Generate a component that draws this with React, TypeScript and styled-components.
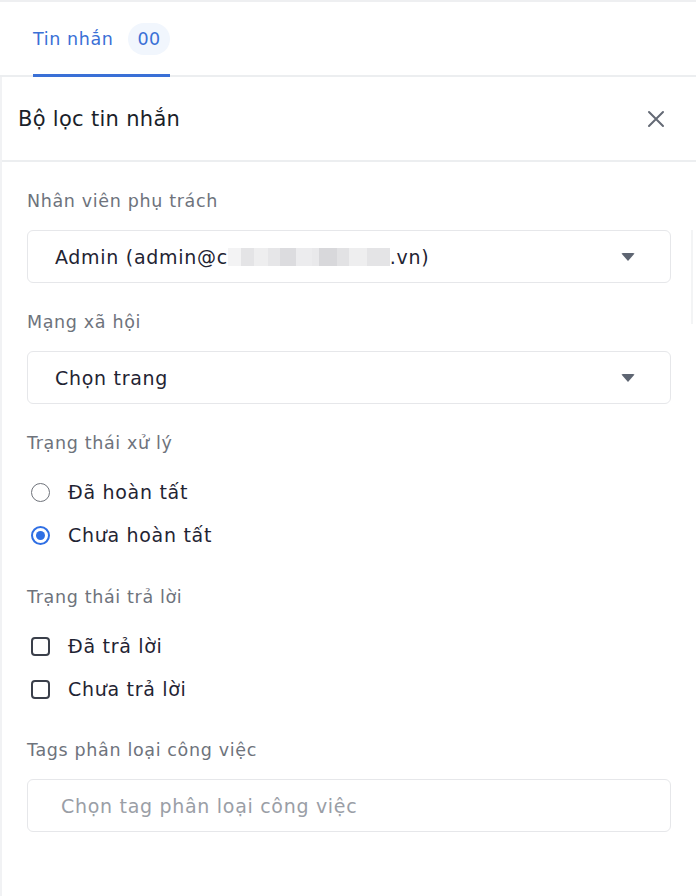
import React from "react";
import styled, { createGlobalStyle } from "styled-components";

const Global = createGlobalStyle`
  html, body { margin: 0; padding: 0; background: #fff; }
  body { font-family: "DejaVu Sans", "Open Sans", sans-serif; color: #1f2433; }
  * { box-sizing: border-box; }
`;

const Page = styled.div`
  width: 696px;
  height: 896px;
  overflow: hidden;
  border-top: 2px solid #eeeff1;
  position: relative;
`;

const TabBar = styled.div`
  height: 75px;
  display: flex;
  align-items: flex-end;
  padding-left: 33px;
  border-bottom: 2px solid #eceef0;
`;

const Tab = styled.div`
  display: flex;
  align-items: center;
  gap: 15px;
  height: 62px;
  padding-bottom: 12px;
  border-bottom: 3px solid #3a70d6;
  margin-bottom: -2px;
`;

const TabText = styled.span`
  font-size: 17.5px;
  letter-spacing: 0.6px;
  color: #3a70d6;
`;

const Badge = styled.span`
  display: inline-flex;
  align-items: center;
  justify-content: center;
  height: 32px;
  padding: 0 9px;
  border-radius: 16px;
  background: #f1f6fd;
  color: #3a70d6;
  font-size: 17.5px;
  letter-spacing: 0.5px;
`;

const Body = styled.div`
  border-left: 2px solid #f1f2f4;
  height: 100%;
`;

const Header = styled.div`
  height: 85px;
  display: flex;
  align-items: center;
  justify-content: space-between;
  padding: 0 30px 0 16px;
  border-bottom: 2px solid #eceef0;
`;

const Title = styled.h1`
  margin: 0;
  font-size: 21px;
  letter-spacing: 0.3px;
  font-weight: 500;
  color: #1b1f2a;
`;

const CloseBtn = styled.button`
  border: 0;
  background: none;
  padding: 0;
  width: 20px;
  height: 20px;
  display: flex;
  align-items: center;
  justify-content: center;
`;

const Form = styled.div`
  padding: 27px 25px 0 25px;
  display: flex;
  flex-direction: column;
`;

const Label = styled.div<{ $mt?: number }>`
  font-size: 17.5px;
  letter-spacing: 0.65px;
  color: #6e737c;
  line-height: 24px;
  margin-top: ${(p) => p.$mt ?? 0}px;
`;

const Select = styled.div<{ $pl?: number }>`
  margin-top: 17px;
  height: 53px;
  border: 1px solid #e6e7ea;
  border-radius: 6px;
  display: flex;
  align-items: center;
  justify-content: space-between;
  padding: 0 35px 0 ${(p) => p.$pl ?? 27}px;
`;

const Value = styled.span<{ $placeholder?: boolean }>`
  font-size: 19px;
  letter-spacing: 0.7px;
  line-height: 24px;
  color: ${(p) => (p.$placeholder ? "#9a9ea6" : "#1f2433")};
  display: inline-flex;
  align-items: center;
  white-space: nowrap;
`;

const Blur = styled.span<{ $w: number }>`
  display: inline-block;
  width: ${(p) => p.$w}px;
  height: 18px;
  background: linear-gradient(
    90deg,
    #f3f3f4 0 8%,
    #e4e4e6 8% 16%,
    #eeeeef 16% 25%,
    #e6e6e8 25% 32%,
    #dcdcdf 32% 42%,
    #ececee 42% 52%,
    #e9e9eb 52% 56%,
    #d8d8db 56% 67%,
    #e2e2e4 67% 75%,
    #eeeeef 75% 86%,
    #e4e4e6 86% 100%
  );
`;

const Caret = styled.span`
  width: 0;
  height: 0;
  border-left: 7px solid transparent;
  border-right: 7px solid transparent;
  border-top: 8px solid #5e6572;
  border-radius: 2px;
`;

const Options = styled.div`
  display: flex;
  flex-direction: column;
  gap: 19px;
  margin-top: 25px;
`;

const Option = styled.label`
  display: flex;
  align-items: center;
  gap: 18px;
  font-size: 19px;
  letter-spacing: 0.7px;
  color: #1f2433;
  line-height: 24px;
  padding-left: 4px;
`;

const Radio = styled.span<{ $checked?: boolean }>`
  width: 19px;
  height: 19px;
  flex: none;
  border-radius: 50%;
  border: ${(p) => (p.$checked ? "2px solid #2f6fe4" : "1.5px solid #6f737b")};
  display: flex;
  align-items: center;
  justify-content: center;
  &::after {
    content: "";
    width: 9px;
    height: 9px;
    border-radius: 50%;
    background: ${(p) => (p.$checked ? "#2f6fe4" : "transparent")};
  }
`;

const Check = styled.span`
  width: 19px;
  height: 19px;
  flex: none;
  border-radius: 4px;
  border: 2px solid #3a3f4a;
`;

const Scroll = styled.div`
  position: absolute;
  right: 3px;
  top: 228px;
  width: 2px;
  height: 94px;
  background: #f3f4f5;
`;

export default function App() {
  return (
    <>
      <Global />
      <Page>
        <TabBar>
          <Tab>
            <TabText>Tin nhắn</TabText>
            <Badge>00</Badge>
          </Tab>
        </TabBar>
        <Body>
          <Header>
            <Title>Bộ lọc tin nhắn</Title>
            <CloseBtn aria-label="close">
              <svg width="18" height="18" viewBox="0 0 18 18">
                <path d="M2 2 L16 16 M16 2 L2 16" stroke="#646a75" strokeWidth="2" strokeLinecap="round" />
              </svg>
            </CloseBtn>
          </Header>
          <Form>
            <Label>Nhân viên phụ trách</Label>
            <Select>
              <Value>
                Admin (admin@c<Blur $w={162} />.vn)
              </Value>
              <Caret />
            </Select>
            <Label $mt={27}>Mạng xã hội</Label>
            <Select>
              <Value>Chọn trang</Value>
              <Caret />
            </Select>
            <Label $mt={27}>Trạng thái xử lý</Label>
            <Options>
              <Option>
                <Radio />
                Đã hoàn tất
              </Option>
              <Option>
                <Radio $checked />
                Chưa hoàn tất
              </Option>
            </Options>
            <Label $mt={38}>Trạng thái trả lời</Label>
            <Options>
              <Option>
                <Check />
                Đã trả lời
              </Option>
              <Option>
                <Check />
                Chưa trả lời
              </Option>
            </Options>
            <Label $mt={37}>Tags phân loại công việc</Label>
            <Select $pl={33}>
              <Value $placeholder>Chọn tag phân loại công việc</Value>
            </Select>
          </Form>
        </Body>
        <Scroll />
      </Page>
    </>
  );
}
